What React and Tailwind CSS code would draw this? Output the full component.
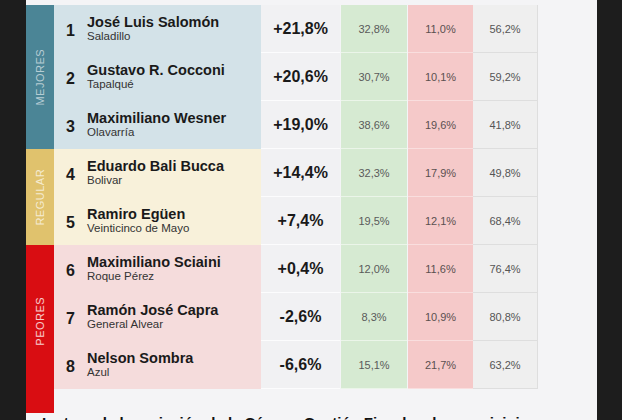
import React from "react";

const rows = [
  { n: 1, name: "José Luis Salomón", city: "Saladillo", ch: "+21,8%", g: "32,8%", r: "11,0%", x: "56,2%", cat: "m" },
  { n: 2, name: "Gustavo R. Cocconi", city: "Tapalqué", ch: "+20,6%", g: "30,7%", r: "10,1%", x: "59,2%", cat: "m" },
  { n: 3, name: "Maximiliano Wesner", city: "Olavarría", ch: "+19,0%", g: "38,6%", r: "19,6%", x: "41,8%", cat: "m" },
  { n: 4, name: "Eduardo Bali Bucca", city: "Bolivar", ch: "+14,4%", g: "32,3%", r: "17,9%", x: "49,8%", cat: "r" },
  { n: 5, name: "Ramiro Egüen", city: "Veinticinco de Mayo", ch: "+7,4%", g: "19,5%", r: "12,1%", x: "68,4%", cat: "r" },
  { n: 6, name: "Maximiliano Sciaini", city: "Roque Pérez", ch: "+0,4%", g: "12,0%", r: "11,6%", x: "76,4%", cat: "p" },
  { n: 7, name: "Ramón José Capra", city: "General Alvear", ch: "-2,6%", g: "8,3%", r: "10,9%", x: "80,8%", cat: "p" },
  { n: 8, name: "Nelson Sombra", city: "Azul", ch: "-6,6%", g: "15,1%", r: "21,7%", x: "63,2%", cat: "p" },
];

const nameBg = { m: "bg-[#d3e2e8]", r: "bg-[#f8f1da]", p: "bg-[#f5dcdc]" };

export default function App() {
  return (
    <div
      className="w-[622px] h-[420px] overflow-hidden flex bg-[#1d1d1d]"
      style={{ fontFamily: '"Liberation Sans", Arial, sans-serif' }}
    >
      <div className="w-[26px] shrink-0" />
      <div className="w-[571px] shrink-0 bg-[#f4f4f6] flex flex-col">
        <div className="h-[5px] shrink-0" />
        <div className="flex shrink-0">
          <div className="w-[28px] flex flex-col shrink-0">
            <div className="h-[144px] bg-[#4b8596] flex items-center justify-center">
              <span className="-rotate-90 whitespace-nowrap text-[11px] tracking-[0.5px] text-white/60">MEJORES</span>
            </div>
            <div className="h-[96px] bg-[#e0c26d] flex items-center justify-center">
              <span className="-rotate-90 whitespace-nowrap text-[11px] tracking-[0.5px] text-white/70">REGULAR</span>
            </div>
            <div className="h-[168px] bg-[#d90d12] flex items-center justify-center pb-[16px]">
              <span className="-rotate-90 whitespace-nowrap text-[11px] tracking-[0.5px] text-white/80">PEORES</span>
            </div>
          </div>
          <div className="flex flex-col">
            {rows.map((row) => (
              <div key={row.n} className="flex h-[48px]">
                <div className={`w-[207px] flex items-center pl-[12px] ${nameBg[row.cat]}`}>
                  <span className="w-[21px] text-[16px] font-bold text-[#1a1a1a] pt-[4px]">{row.n}</span>
                  <div className="flex flex-col">
                    <span className="text-[14.5px] font-bold text-[#1a1a1a] leading-[15px]">{row.name}</span>
                    <span className="text-[11.5px] text-[#333] leading-[13px]">{row.city}</span>
                  </div>
                </div>
                <div className="w-[79px] flex items-center justify-center bg-[#f1f1f3] border-b border-white/80 text-[16px] font-bold text-[#1a1a1a]">
                  {row.ch}
                </div>
                <div className="w-[66px] ml-[1px] flex items-center justify-center bg-[#d6ead2] border-b border-white/50 text-[11px] text-[#5a5a5a] pt-[2px]">
                  {row.g}
                </div>
                <div className="w-[65px] ml-[1px] flex items-center justify-center bg-[#f5c9c9] border-b border-white/40 text-[11px] text-[#5a5050] pt-[2px]">
                  {row.r}
                </div>
                <div className="w-[65px] flex items-center justify-center bg-[#efefef] border-b border-r border-[#dedede] text-[11px] text-[#555] pt-[2px]">
                  {row.x}
                </div>
              </div>
            ))}
          </div>
        </div>
        <div className="pl-[16px] pt-[1px] whitespace-nowrap text-[15px] font-bold text-[#111] leading-[18px]">
          La tasa de la variación de la Cámara Gestión Fiscal en los municipios
        </div>
      </div>
    </div>
  );
}
